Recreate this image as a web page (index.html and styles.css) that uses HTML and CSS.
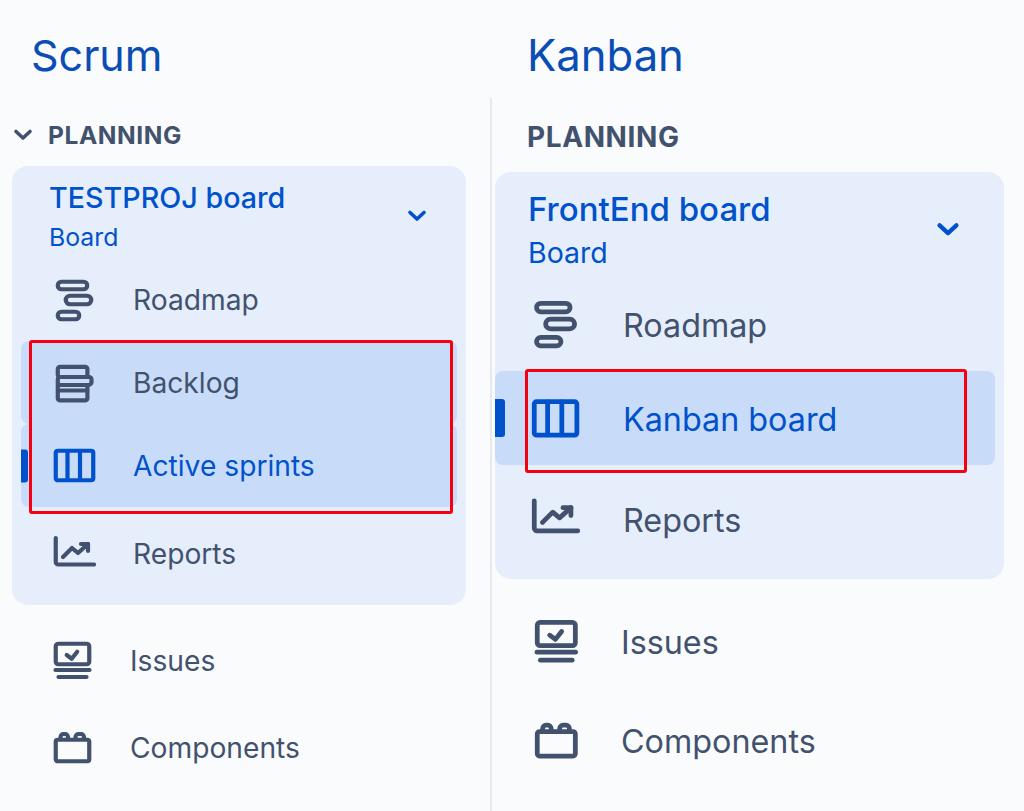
FILE: index.html
```html
<!DOCTYPE html>
<html lang="en">
<head>
    <meta charset="UTF-8">
    <meta name="viewport" content="width=device-width, initial-scale=1.0">
    <title>Scrum and Kanban</title>
    <link rel="stylesheet" href="styles.css">
</head>
<body>
    <svg class="defs" aria-hidden="true">
        <symbol id="i-roadmap" viewBox="0 0 44 44">
            <rect x="5.75" y="3.75" width="29.5" height="7.5" rx="3.75"/>
            <rect x="13.75" y="17.75" width="25.5" height="8.5" rx="4.25"/>
            <rect x="5.75" y="33.75" width="21.5" height="7.5" rx="3.75"/>
        </symbol>
        <symbol id="i-backlog" viewBox="0 0 44 44">
            <path d="M35 16H8a2.2 2.2 0 0 1-2.2-2.2V8A2.2 2.2 0 0 1 8 5.8h25.2a2.2 2.2 0 0 1 2.2 2.2v8"/>
            <path d="M8 16h29a2.5 2.5 0 0 1 2.5 2.5v2.5a3 3 0 0 1-3 3H35.2"/>
            <path d="M8 16a2.2 2.2 0 0 0-2.2 2.2v19A2.2 2.2 0 0 0 8 39.4h25.2a2.2 2.2 0 0 0 2.2-2.2V24H6"/>
            <path d="M6 29.5h29"/>
        </symbol>
        <symbol id="i-board" viewBox="0 0 44 44">
            <rect x="3.75" y="6.75" width="37.5" height="29.5" rx="2"/>
            <path d="M15.5 7v29M28 7v29"/>
        </symbol>
        <symbol id="i-reports" viewBox="0 0 44 44">
            <path d="M3.75 6v24a2.5 2.5 0 0 0 2.5 2.5H42"/>
            <path d="M11 25l9-9 6 5 10-9"/>
            <path d="M29 12h7v7"/>
        </symbol>
        <symbol id="i-issues" viewBox="0 0 44 44">
            <rect x="3.75" y="4.75" width="33.5" height="20.5" rx="2.5"/>
            <path d="M14.7 16l5 3.7 5.5-7"/>
            <path d="M3.5 31h34"/>
            <path d="M6.5 38h28"/>
        </symbol>
        <symbol id="i-components" viewBox="0 0 44 44">
            <rect x="3.75" y="13.75" width="33.5" height="21.5" rx="2"/>
            <path d="M8.5 13v-2a3 3 0 0 1 3-3H13a3 3 0 0 1 3 3v2"/>
            <path d="M23.5 13v-2a3 3 0 0 1 3-3H29a3 3 0 0 1 3 3v2"/>
        </symbol>
        <symbol id="i-chevron" viewBox="0 0 20 14">
            <path d="M3 3.5l7 6.5 7-6.5"/>
        </symbol>
    </svg>

    <section class="col scrum">
        <h1 class="title">Scrum</h1>
        <div class="col-body">
            <div class="section-head">
                <svg class="head-chevron"><use href="#i-chevron"/></svg>
                <span>PLANNING</span>
            </div>
            <div class="card">
                <div class="card-head">
                    <div>
                        <div class="board-name">TESTPROJ board</div>
                        <div class="board-type">Board</div>
                    </div>
                    <svg class="card-chevron"><use href="#i-chevron"/></svg>
                </div>
                <div class="row"><svg class="icon"><use href="#i-roadmap"/></svg><span>Roadmap</span></div>
                <div class="row selected"><svg class="icon"><use href="#i-backlog"/></svg><span>Backlog</span></div>
                <div class="row selected active"><svg class="icon"><use href="#i-board"/></svg><span>Active sprints</span></div>
                <div class="row reports"><svg class="icon"><use href="#i-reports"/></svg><span>Reports</span></div>
            </div>
            <div class="row plain first"><svg class="icon"><use href="#i-issues"/></svg><span>Issues</span></div>
            <div class="row plain"><svg class="icon"><use href="#i-components"/></svg><span>Components</span></div>
            <div class="mark"></div>
        </div>
    </section>

    <section class="col kanban">
        <h1 class="title">Kanban</h1>
        <div class="col-body">
            <div class="section-head">
                <span>PLANNING</span>
            </div>
            <div class="card">
                <div class="card-head">
                    <div>
                        <div class="board-name">FrontEnd board</div>
                        <div class="board-type">Board</div>
                    </div>
                    <svg class="card-chevron"><use href="#i-chevron"/></svg>
                </div>
                <div class="row"><svg class="icon"><use href="#i-roadmap"/></svg><span>Roadmap</span></div>
                <div class="row selected active"><svg class="icon"><use href="#i-board"/></svg><span>Kanban board</span></div>
                <div class="row reports"><svg class="icon"><use href="#i-reports"/></svg><span>Reports</span></div>
            </div>
            <div class="row plain first"><svg class="icon"><use href="#i-issues"/></svg><span>Issues</span></div>
            <div class="row plain"><svg class="icon"><use href="#i-components"/></svg><span>Components</span></div>
            <div class="mark"></div>
        </div>
    </section>
</body>
</html>
```
FILE: styles.css
```css
* {
    box-sizing: border-box;
}

html, body {
    height: 100%;
}

body {
    margin: 0;
    display: flex;
    overflow: hidden;
    background-color: #fafbfc;
    color: #42526e;
    font-family: Inter, "Liberation Sans", sans-serif;
}

.defs {
    display: none;
}

svg {
    fill: none;
    stroke: currentColor;
    stroke-linecap: round;
    stroke-linejoin: round;
}

.col-body {
    position: relative;
}

.title {
    margin: 0;
    height: 98px;
    font-weight: 400;
    color: #0a4db5;
}

.section-head {
    display: flex;
    align-items: center;
    font-weight: 700;
    letter-spacing: 0.6px;
}

.card {
    background-color: #e6eefb;
    border-radius: 16px;
}

.card-head {
    display: flex;
    justify-content: space-between;
    align-items: flex-start;
    color: #0052cc;
}

.board-name {
    font-weight: 500;
}

.card-chevron, .head-chevron {
    stroke-width: 3.6;
}

.row {
    display: flex;
    align-items: center;
    position: relative;
}

.row .icon {
    flex: none;
    stroke-width: 4.2;
}

.selected {
    background-color: #c8dcf9;
    border-radius: 8px;
}

.active {
    color: #0052cc;
}

.active::before {
    content: "";
    position: absolute;
    left: 0;
    top: 50%;
    transform: translateY(-50%);
    background-color: #0052cc;
    border-radius: 0 3px 3px 0;
}

.mark {
    position: absolute;
    border: 3px solid #f5000f;
    border-radius: 3px;
}

/* Scrum column */
.scrum {
    width: 492px;
    flex: none;
}

.scrum .title {
    padding: 28px 0 0 31px;
    font-size: 43px;
    line-height: 54px;
}

.scrum .col-body {
    height: 713px;
    border-right: 2px solid #e6e8eb;
    padding: 0 24px 0 12px;
}

.scrum .section-head {
    height: 68px;
    padding: 6px 0 0 1px;
    font-size: 24.5px;
}

.head-chevron {
    width: 20px;
    height: 14px;
    margin-right: 15px;
}

.scrum .card {
    width: 454px;
    height: 439px;
    padding: 0 9px;
}

.scrum .card-head {
    height: 92px;
    padding: 14px 30px 0 28px;
}

.scrum .board-name {
    font-size: 28.7px;
    line-height: 36px;
    padding-bottom: 6px;
}

.scrum .board-type {
    font-size: 24.8px;
    line-height: 30px;
}

.scrum .card-chevron {
    width: 20px;
    height: 14px;
    margin-top: 29px;
}

.scrum .row {
    height: 83px;
    padding-left: 31px;
    gap: 37px;
    font-size: 28.2px;
}

.scrum .row.reports {
    margin-top: 5px;
}

.scrum .row.plain {
    height: 87px;
    padding-left: 40px;
    gap: 34px;
}

.scrum .row.plain.first {
    margin-top: 12px;
}

.scrum .active::before {
    width: 7px;
    height: 33px;
}

.scrum .icon {
    width: 44px;
    height: 44px;
}

.scrum .mark {
    left: 29px;
    top: 242px;
    width: 424px;
    height: 174px;
}

/* Kanban column */
.kanban {
    flex: 1;
}

.kanban .title {
    padding: 29px 0 0 35px;
    font-size: 43.6px;
    line-height: 54px;
}

.kanban .col-body {
    padding: 0 20px 0 3px;
}

.kanban .section-head {
    height: 74px;
    padding: 4px 0 0 32px;
    font-size: 28px;
}

.kanban .card {
    height: 407px;
}

.kanban .card-head {
    height: 105px;
    padding: 17px 44px 0 33px;
}

.kanban .board-name {
    font-size: 33px;
    line-height: 40px;
    padding-bottom: 7px;
}

.kanban .board-type {
    font-size: 28.5px;
    line-height: 34px;
}

.kanban .card-chevron {
    width: 24px;
    height: 17px;
    margin-top: 32px;
}

.kanban .row {
    height: 94px;
    padding-left: 35px;
    gap: 43px;
    font-size: 32.3px;
}

.kanban .row span {
    padding-top: 2px;
}

.kanban .row.selected {
    margin-right: 9px;
}

.kanban .row.selected .icon {
    margin-top: 2px;
}

.kanban .row.reports {
    margin-top: 7px;
}

.kanban .row.plain {
    height: 99px;
    padding-left: 38px;
    gap: 38px;
}

.kanban .row.plain.first {
    margin-top: 13px;
}

.kanban .active::before {
    width: 10px;
    height: 38px;
}

.kanban .icon {
    width: 50px;
    height: 50px;
}

.kanban .mark {
    left: 33px;
    top: 271px;
    width: 442px;
    height: 104px;
}
```
